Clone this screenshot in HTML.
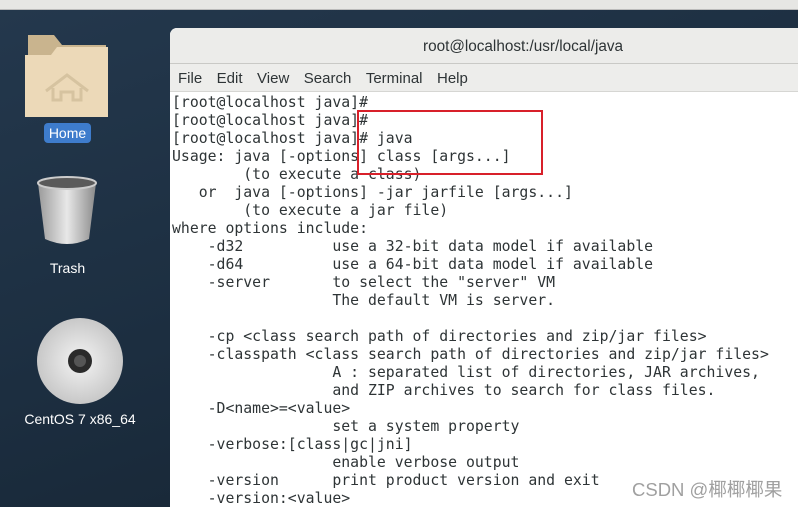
<!DOCTYPE html>
<html><head><meta charset="utf-8"><style>
html,body{margin:0;padding:0;width:798px;height:507px;overflow:hidden;}
body{background:linear-gradient(160deg,#24384d 0%,#1c2e40 50%,#15222f 100%);position:relative;font-family:"Liberation Sans","DejaVu Sans",sans-serif;}
.top{position:absolute;left:0;top:0;width:798px;height:9px;background:#e6e6e4;border-bottom:1px solid #bbb;}
.win{position:absolute;left:170px;top:28px;width:640px;height:490px;background:#fff;border-radius:7px 7px 0 0;overflow:hidden;}
.title{height:36px;background:#ececea;border-bottom:1px solid #c9c9c6;text-align:center;font-size:15.3px;line-height:37px;color:#2e3436;padding-left:66px;box-sizing:border-box;}
.menu{height:27px;background:#ededeb;border-bottom:1px solid #d6d6d3;font-size:15px;line-height:30px;color:#2e3436;padding-left:8px;}
.menu span{margin-right:14.5px;}
pre{margin:0;position:absolute;font-family:"DejaVu Sans Mono","Liberation Mono",monospace;font-size:14.8px;line-height:18px;color:#2e3436;}
.red{position:absolute;left:357px;top:110px;width:182px;height:61px;border:2px solid #d8202a;}
.lbl{position:absolute;color:#fff;font-size:14px;text-align:center;}
.wm{position:absolute;left:632px;top:476px;font-size:18.5px;color:#a0a0a0;font-family:"Liberation Sans","Noto Sans CJK SC",sans-serif;}
</style></head><body>
<div class="top"></div>
<svg style="position:absolute;left:24px;top:33px" width="86" height="84" viewBox="0 0 86 84">
<path d="M4 2 h26 l8 10 h44 v10 H4z" fill="#c9b48e"/>
<path d="M1 22 h26 l6 -8 h51 v70 H1z" fill="#ecd9b8"/>
<path d="M22 58 l21-16 21 16 M29 55 v12 h8 v-8 h12 v8 h8 v-12" fill="none" stroke="#d6c3a0" stroke-width="3"/>
</svg>
<div class="lbl" style="left:44px;top:123px;width:47px;height:20px;line-height:20px;background:#3e7ccc;border-radius:4px;">Home</div>
<svg style="position:absolute;left:35px;top:175px" width="64" height="72" viewBox="0 0 64 72">
<defs><linearGradient id="tg" x1="0" x2="1"><stop offset="0" stop-color="#9a9a9a"/><stop offset=".5" stop-color="#e8e8e8"/><stop offset="1" stop-color="#8a8a8a"/></linearGradient></defs>
<path d="M3 8 L10 64 Q32 74 54 64 L61 8z" fill="url(#tg)"/>
<ellipse cx="32" cy="8" rx="29" ry="6" fill="#5a5a5a" stroke="#ccc" stroke-width="2"/>
</svg>
<div class="lbl" style="left:40px;top:260px;width:55px;">Trash</div>
<svg style="position:absolute;left:36px;top:317px" width="88" height="88" viewBox="0 0 88 88">
<defs><radialGradient id="cg"><stop offset="0" stop-color="#f4f4f4"/><stop offset="1" stop-color="#c8c8c8"/></radialGradient></defs>
<circle cx="44" cy="44" r="43" fill="url(#cg)"/>
<circle cx="44" cy="44" r="12" fill="#2a2a2a"/><circle cx="44" cy="44" r="6" fill="#555"/>
</svg>
<div class="lbl" style="left:16px;top:411px;width:128px;">CentOS 7 x86_64</div>
<div class="win">
<div class="title">root@localhost:/usr/local/java</div>
<div class="menu"><span>File</span><span>Edit</span><span>View</span><span>Search</span><span>Terminal</span><span>Help</span></div>
</div>
<pre style="left:172px;top:94px">[root@localhost java]#
[root@localhost java]#
[root@localhost java]# java
Usage: java [-options] class [args...]
        (to execute a class)
   or  java [-options] -jar jarfile [args...]
        (to execute a jar file)
where options include:
    -d32          use a 32-bit data model if available
    -d64          use a 64-bit data model if available
    -server       to select the "server" VM
                  The default VM is server.

    -cp &lt;class search path of directories and zip/jar files&gt;
    -classpath &lt;class search path of directories and zip/jar files&gt;
                  A : separated list of directories, JAR archives,
                  and ZIP archives to search for class files.
    -D&lt;name&gt;=&lt;value&gt;
                  set a system property
    -verbose:[class|gc|jni]
                  enable verbose output
    -version      print product version and exit
    -version:&lt;value&gt;</pre>
<div class="red"></div>
<div class="wm">CSDN @椰椰椰果</div>
</body></html>
